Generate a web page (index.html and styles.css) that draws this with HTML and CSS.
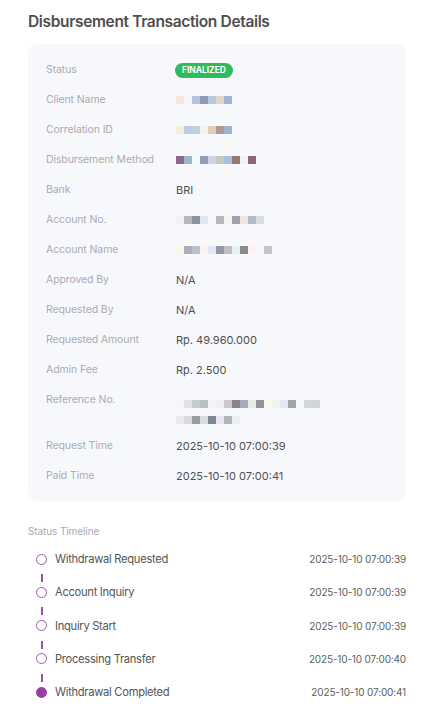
FILE: index.html
```html
<!DOCTYPE html>
<html>
<head>
<meta charset="utf-8">
<link rel="stylesheet" href="styles.css">
</head>
<body>
<div class="page">
  <h1 class="title">Disbursement Transaction Details</h1>
  <div class="card">
    <div class="row"><div class="label">Status</div><div class="value"><span class="badge">FINALIZED</span></div></div>
    <div class="row"><div class="label">Client Name</div><div class="value"><div class="px">
      <i style="background:#f5e6d9"></i><i style="background:#f3f5fb"></i><i style="background:#b3c5de"></i><i style="background:#8e9bb3"></i><i style="background:#b7c7dc"></i><i style="background:#e2d6c8"></i><i style="background:#9fb3d3"></i>
    </div></div></div>
    <div class="row"><div class="label">Correlation ID</div><div class="value"><div class="px">
      <i style="background:#f4f0d8"></i><i style="background:#bdcde0"></i><i style="background:#c3cfe2"></i><i style="background:#f2f5ec"></i><i style="background:#e4cdb8"></i><i style="background:#aa9a9a"></i><i style="background:#9fb3d3"></i>
    </div></div></div>
    <div class="row"><div class="label">Disbursement Method</div><div class="value"><div class="px">
      <i style="background:#8c6b8a"></i><i style="background:#9cb5d1"></i><i style="background:transparent"></i><i style="background:#8f9db5"></i><i style="background:#c8d3e6"></i><i style="background:#c4c8c0"></i><i style="background:#a9c0e0"></i><i style="background:#957a72"></i><i style="background:#eef3fb"></i><i style="background:#8e6673"></i>
    </div></div></div>
    <div class="row"><div class="label">Bank</div><div class="value">BRI</div></div>
    <div class="row"><div class="label">Account No.</div><div class="value"><div class="px">
      <i style="background:#f3f0f5"></i><i style="background:#b8b4c0"></i><i style="background:#8e929f"></i><i style="background:#e0e6f2"></i><i style="background:transparent"></i><i style="background:#bbb5be"></i><i style="background:#f5f3f0"></i><i style="background:#a19fa8"></i><i style="background:#ede6e6"></i><i style="background:#b3b9c8"></i><i style="background:#d9dde0"></i>
    </div></div></div>
    <div class="row"><div class="label">Account Name</div><div class="value"><div class="px">
      <i style="background:#f8f8e6"></i><i style="background:#aeaeb8"></i><i style="background:#c0c0c8"></i><i style="background:#fbf3f0"></i><i style="background:#e0e8f4"></i><i style="background:#9398a8"></i><i style="background:#c0bcc8"></i><i style="background:#e2f4f2"></i><i style="background:#8a8a8a"></i><i style="background:#fff1ee"></i><i style="background:transparent"></i><i style="background:#c4c4c4"></i>
    </div></div></div>
    <div class="row"><div class="label">Approved By</div><div class="value">N/A</div></div>
    <div class="row"><div class="label">Requested By</div><div class="value">N/A</div></div>
    <div class="row"><div class="label">Requested Amount</div><div class="value">Rp. 49.960.000</div></div>
    <div class="row"><div class="label">Admin Fee</div><div class="value">Rp. 2.500</div></div>
    <div class="row"><div class="label">Reference No.</div><div class="value ref">
      <div class="px">
        <i style="background:#f3f5fb"></i><i style="background:#e0e2e8"></i><i style="background:#c5cace"></i><i style="background:#b8c0c4"></i><i style="background:#f2f4f8"></i><i style="background:#eef0f4"></i><i style="background:#cac8cc"></i><i style="background:#8a8488"></i><i style="background:#a8aab4"></i><i style="background:#e8eae4"></i><i style="background:#909498"></i><i style="background:#f8f8f0"></i><i style="background:#f3f3ee"></i><i style="background:#e4e8f0"></i><i style="background:#a0a4a8"></i><i style="background:#f6f7fb"></i><i style="background:#d4d6dc"></i><i style="background:#d0d4dc"></i>
      </div>
      <div class="px">
        <i style="background:#e8eaee"></i><i style="background:#d8dae0"></i><i style="background:#9a9c9e"></i><i style="background:#d8dce4"></i><i style="background:#7e8890"></i><i style="background:#e8e6ee"></i><i style="background:#b0b4bc"></i><i style="background:#eceef4"></i>
      </div>
    </div></div>
    <div class="row"><div class="label">Request Time</div><div class="value">2025-10-10 07:00:39</div></div>
    <div class="row"><div class="label">Paid Time</div><div class="value">2025-10-10 07:00:41</div></div>
  </div>

  <div class="tl-title">Status Timeline</div>
  <div class="timeline">
    <div class="tl-item"><span class="dot"></span><span class="tl-name">Withdrawal Requested</span><span class="tl-time">2025-10-10 07:00:39</span></div>
    <div class="tl-conn"><span class="line"></span></div>
    <div class="tl-item"><span class="dot"></span><span class="tl-name">Account Inquiry</span><span class="tl-time">2025-10-10 07:00:39</span></div>
    <div class="tl-conn"><span class="line"></span></div>
    <div class="tl-item"><span class="dot"></span><span class="tl-name">Inquiry Start</span><span class="tl-time">2025-10-10 07:00:39</span></div>
    <div class="tl-conn"><span class="line"></span></div>
    <div class="tl-item"><span class="dot"></span><span class="tl-name">Processing Transfer</span><span class="tl-time">2025-10-10 07:00:40</span></div>
    <div class="tl-conn"><span class="line"></span></div>
    <div class="tl-item"><span class="dot filled"></span><span class="tl-name">Withdrawal Completed</span><span class="tl-time">2025-10-10 07:00:41</span></div>
  </div>
</div>
</body>
</html>
```
FILE: styles.css
```css
* { box-sizing: border-box; }
html, body { margin: 0; padding: 0; background: #ffffff; }
body { font-family: Inter, "Noto Sans", sans-serif; color: #4a4a4a; }
.page { padding: 12px 27px 0 28px; }
.title {
  margin: 0;
  font-size: 15.5px;
  font-weight: 600;
  line-height: 20px;
  color: #4e4e4e;
  letter-spacing: -0.35px;
}
.card {
  margin-top: 12px;
  background: #f7f8fc;
  border-radius: 9px;
  padding: 18px 18px 17px 18px;
  display: flex;
  flex-direction: column;
  gap: 14px;
}
.row { display: flex; align-items: flex-start; }
.label {
  width: 130px;
  flex: none;
  font-size: 10.5px;
  line-height: 16px;
  color: #abacb1;
  letter-spacing: -0.1px;
}
.value {
  font-size: 11px;
  line-height: 16px;
  color: #505050;
  display: flex;
  align-items: center;
  min-height: 16px;
}
.value.ref { flex-direction: column; align-items: flex-start; padding-top: 8px; gap: 8px; }
.badge {
  display: inline-block;
  background: #2dbb5c;
  color: #ffffff;
  font-size: 8.5px;
  font-weight: 700;
  line-height: 15px;
  height: 15px;
  padding: 0 7px;
  border-radius: 8px;
  letter-spacing: -0.05px;
  margin-left: -1px;
}
.px { display: flex; height: 8px; }
.px i { display: block; width: 8px; height: 8px; }
.tl-title {
  margin-top: 24px;
  font-size: 10px;
  line-height: 12px;
  color: #a9a9ae;
  letter-spacing: -0.1px;
}
.timeline { margin-top: 14px; padding-left: 8px; display: flex; flex-direction: column; }
.tl-item { display: flex; align-items: center; height: 16px; }
.dot {
  width: 11px; height: 11px;
  border: 1.2px solid #9c5aa8;
  border-radius: 50%;
  flex: none;
  margin-right: 8px;
}
.dot.filled { background: #9441a1; border-color: #9441a1; }
.tl-name { font-size: 11.2px; color: #555555; letter-spacing: -0.3px; flex: 1; }
.tl-time { font-size: 10px; color: #606060; letter-spacing: -0.15px; }
.tl-conn { height: 17.3px; padding-left: 5px; padding-top: 7px; }
.line { display: block; width: 1.5px; height: 8px; background: #9c4fa8; }
```
